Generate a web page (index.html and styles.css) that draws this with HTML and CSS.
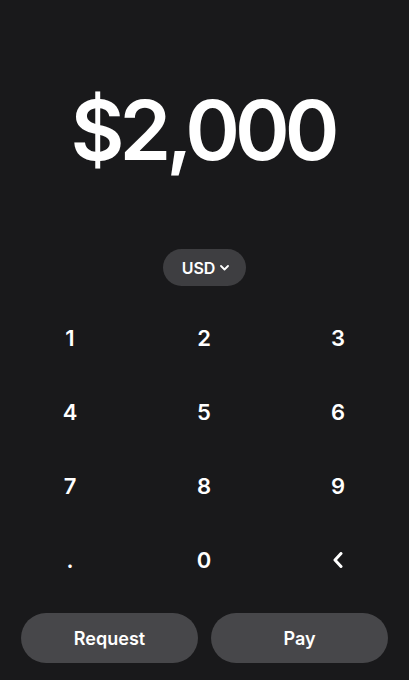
FILE: index.html
```html
<!DOCTYPE html>
<html lang="en">
<head>
<meta charset="utf-8">
<title>Amount</title>
<link rel="stylesheet" href="styles.css">
</head>
<body>
<main class="screen">
  <div class="amount">$2,000</div>
  <div class="currency-row">
    <button class="currency">USD
      <svg class="chev-down" width="9" height="6" viewBox="0 0 9 6"><path d="M1 1 L4.5 4.5 L8 1" fill="none" stroke="#fff" stroke-width="1.8" stroke-linecap="round" stroke-linejoin="round"/></svg>
    </button>
  </div>
  <div class="keypad">
    <div class="key">1</div>
    <div class="key">2</div>
    <div class="key">3</div>
    <div class="key">4</div>
    <div class="key">5</div>
    <div class="key">6</div>
    <div class="key">7</div>
    <div class="key">8</div>
    <div class="key">9</div>
    <div class="key">.</div>
    <div class="key">0</div>
    <div class="key"><svg width="12" height="16" viewBox="0 0 12 16"><path d="M9 1.5 L3 8 L9 14.5" fill="none" stroke="#fff" stroke-width="3" stroke-linecap="round" stroke-linejoin="round"/></svg></div>
  </div>
  <div class="actions">
    <button class="action">Request</button>
    <button class="action">Pay</button>
  </div>
</main>
</body>
</html>
```
FILE: styles.css
```css
html, body {
  margin: 0;
  padding: 0;
  background: #19191b;
}
.screen {
  width: 409px;
  height: 680px;
  display: flex;
  flex-direction: column;
  font-family: Inter, "Noto Sans", sans-serif;
  color: #fff;
}
.amount {
  margin-top: 80px;
  height: 100px;
  line-height: 100px;
  font-size: 83px;
  font-weight: 600;
  text-align: center;
  letter-spacing: -5px;
  padding-right: 4px;
}
.currency-row {
  margin-top: 69px;
  display: flex;
  justify-content: center;
}
.currency {
  width: 83px;
  height: 37px;
  border: none;
  border-radius: 19px;
  background: #3e3e41;
  color: #fff;
  font-family: inherit;
  font-size: 16px;
  font-weight: 600;
  display: flex;
  align-items: center;
  justify-content: center;
  gap: 5px;
  padding: 0 0 0 2px;
}
.keypad {
  margin-top: 15px;
  padding: 0 4px 0 3px;
  display: grid;
  grid-template-columns: repeat(3, 134px);
  grid-auto-rows: 74px;
}
.key {
  display: flex;
  align-items: center;
  justify-content: center;
  font-size: 22px;
  font-weight: 600;
}
.actions {
  margin-top: 16px;
  padding: 0 21px;
  display: flex;
  gap: 13px;
}
.action {
  flex: 1;
  height: 50px;
  border: none;
  border-radius: 25px;
  background: #47474a;
  color: #fff;
  font-family: inherit;
  font-size: 18px;
  font-weight: 600;
  padding: 0;
}
```
